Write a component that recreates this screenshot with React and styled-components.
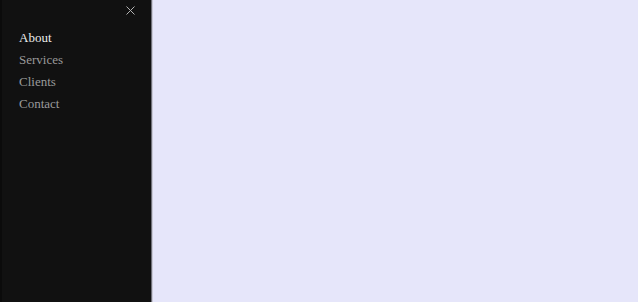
import React from 'react';
import styled, { createGlobalStyle } from 'styled-components';

const GlobalStyle = createGlobalStyle`
    html, body {
        margin: 0;
        padding: 0;
        height: 100%;
        background: #e6e6fa;
    }
    #root {
        height: 100%;
    }
`;

const links = [
    { label: 'About', active: true },
    { label: 'Services' },
    { label: 'Clients' },
    { label: 'Contact' },
];

const App = () => (
    <>
        <GlobalStyle />
        <Page>
            <SideNav>
                <CloseButton aria-label="Close">
                    <svg width="9" height="9" viewBox="0 0 9 9">
                        <path d="M0.5 0.5 L8.5 8.5 M8.5 0.5 L0.5 8.5" stroke="#b4b4b4" strokeWidth="1" fill="none" />
                    </svg>
                </CloseButton>
                <NavList>
                    {links.map(({ label, active }) => (
                        <NavLink key={label} href="#" $active={active}>
                            {label}
                        </NavLink>
                    ))}
                </NavList>
            </SideNav>
            <Main />
        </Page>
    </>
);

export default App;

const Page = styled.div`
    display: flex;
    height: 100%;
    min-height: 302px;
`;

const SideNav = styled.nav`
    position: relative;
    width: 149px;
    flex-shrink: 0;
    background: #111111;
    border-left: 2px solid #0b0b0b;
    border-right: 1px solid #6f6f78;
    box-shadow: 1px 0 0 #c9c9d6;
`;

const CloseButton = styled.button`
    position: absolute;
    top: 6px;
    right: 16px;
    padding: 0;
    border: 0;
    background: none;
    display: flex;
    cursor: pointer;
`;

const NavList = styled.div`
    display: flex;
    flex-direction: column;
    padding: 27px 0 0 17px;
`;

const NavLink = styled.a`
    font-family: 'Liberation Serif', 'Times New Roman', serif;
    font-size: 13px;
    line-height: 22px;
    text-decoration: none;
    color: ${({ $active }) => ($active ? '#ececec' : '#9a9a9a')};
`;

const Main = styled.main`
    flex: 1;
    background: #e6e6fa;
`;
